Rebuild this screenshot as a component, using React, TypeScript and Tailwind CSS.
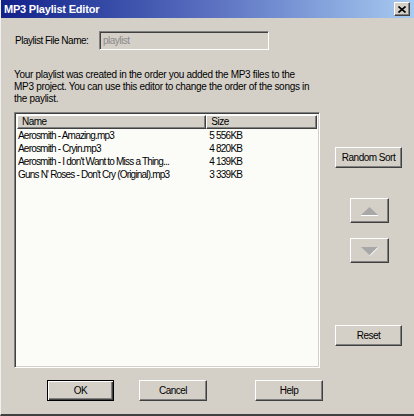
import React from "react";

const raised =
  "border border-t-white border-l-white border-r-[#404040] border-b-[#404040] shadow-[inset_-1px_-1px_0_#808080]";
const sunken =
  "border border-t-[#808080] border-l-[#808080] border-r-white border-b-white shadow-[inset_1px_1px_0_#404040,inset_-1px_-1px_0_#d4d0c8]";

const songs = [
  { name: "Aerosmith - Amazing.mp3", size: "5 556KB" },
  { name: "Aerosmith - Cryin.mp3", size: "4 820KB" },
  { name: "Aerosmith - I don't Want to Miss a Thing...", size: "4 139KB" },
  { name: "Guns N' Roses - Don't Cry (Original).mp3", size: "3 339KB" },
];

function Btn({ label, className = "", isDefault = false }: { label: string; className?: string; isDefault?: boolean }) {
  const border = isDefault
    ? "border border-black shadow-[inset_1px_1px_0_#fff,inset_-1px_-1px_0_#404040,inset_-2px_-2px_0_#808080]"
    : raised;
  return (
    <button
      className={`h-[21px] w-[67px] bg-[#d4d0c8] text-black text-[10px] tracking-[-0.5px] whitespace-nowrap ${border} ${className}`}
    >
      {label}
    </button>
  );
}

function ArrowBtn({ up }: { up: boolean }) {
  return (
    <button className={`h-[25px] w-[39px] bg-[#d4d0c8] flex items-center justify-center ${raised}`}>
      <svg width="19" height="10" viewBox="0 0 19 10">
        {up ? (
          <>
            <polygon points="9.5,1 18,9 1,9" fill="#a8a8a8" />
            <line x1="1" y1="9.5" x2="18" y2="9.5" stroke="#ffffff" />
          </>
        ) : (
          <>
            <polygon points="1,1 18,1 9.5,9" fill="#a8a8a8" />
            <line x1="10" y1="9.5" x2="18" y2="1.5" stroke="#ffffff" />
          </>
        )}
      </svg>
    </button>
  );
}

export default function App() {
  return (
    <div
      className="w-[414px] h-[416px] bg-[#d4d0c8] flex flex-col border-l border-l-[#f0f0f0] border-b-2 border-b-[#404040] text-[10px] tracking-[-0.5px] text-black"
      style={{ fontFamily: '"Liberation Sans", Arial, sans-serif' }}
    >
      {/* title bar */}
      <div className="h-[18px] flex items-center justify-between pl-[3px] pr-[4px] bg-gradient-to-r from-[#141f8a] via-[#5a6fc0] to-[#a8cbf0]">
        <span className="text-white font-bold text-[11px] tracking-[-0.2px] leading-none">MP3 Playlist Editor</span>
        <button className={`w-[16px] h-[14px] bg-[#d4d0c8] flex items-center justify-center ${raised}`}>
          <svg width="8" height="7" viewBox="0 0 8 7">
            <path d="M0.5 0.5 L7.5 6.5 M7.5 0.5 L0.5 6.5" stroke="#000" strokeWidth="1.6" />
          </svg>
        </button>
      </div>

      <div className="flex flex-col pl-[13px] pr-[12px]">
        <div className="flex items-center mt-[13px]">
          <span className="w-[85px] pl-[1px] whitespace-nowrap">Playlist File Name:</span>
          <div className={`w-[170px] h-[19px] bg-[#d4d0c8] flex items-center pl-[3px] text-[#8a8a8a] ${sunken}`}>
            playlist
          </div>
        </div>

        <p className="mt-[19px] leading-[12px] tracking-[-0.3px] whitespace-nowrap">
          Your playlist was created in the order you added the MP3 files to the
          <br />
          MP3 project. You can use this editor to change the order of the songs in
          <br />
          the paylist.
        </p>

        <div className="flex mt-[7px]">
          <div className={`w-[306px] h-[256px] bg-[#fbfcf8] p-[2px] ${sunken}`}>
            <div className="flex h-[14px] leading-[12px]">
              <div className={`w-[190px] pl-[4px] bg-[#d4d0c8] ${raised}`}>Name</div>
              <div className={`w-[111px] pl-[4px] bg-[#d4d0c8] ${raised}`}>Size</div>
            </div>
            {songs.map((s) => (
              <div key={s.name} className="flex h-[13px] leading-[13px] whitespace-nowrap tracking-[-0.8px]">
                <div className="w-[190px] pl-[1px] overflow-hidden">{s.name}</div>
                <div className="w-[111px] pl-[3px]">{s.size}</div>
              </div>
            ))}
          </div>

          <div className="flex flex-col items-center ml-[15px] w-[67px]">
            <Btn label="Random Sort" className="mt-[35px]" />
            <div className="mt-[30px] pl-[2px]">
              <ArrowBtn up />
            </div>
            <div className="mt-[15px] pl-[2px]">
              <ArrowBtn up={false} />
            </div>
            <Btn label="Reset" className="mt-[62px]" />
          </div>
        </div>

        <div className="flex mt-[12px]">
          <Btn label="OK" isDefault className="ml-[33px]" />
          <Btn label="Cancel" className="ml-[25px] w-[68px]" />
          <Btn label="Help" className="ml-[48px] w-[68px]" />
        </div>
      </div>
    </div>
  );
}
